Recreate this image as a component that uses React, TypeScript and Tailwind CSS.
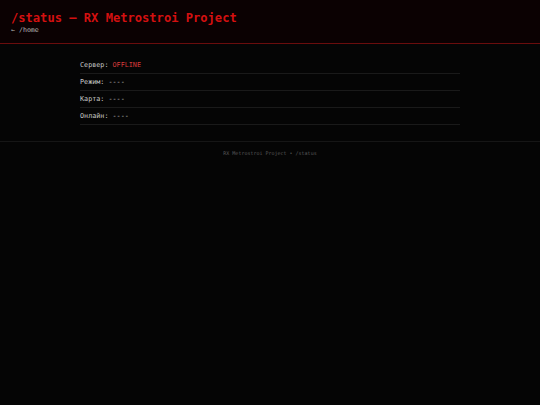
export default function App() {
  const rows: { label: string; value: string; offline?: boolean }[] = [
    { label: "Сервер:", value: "OFFLINE", offline: true },
    { label: "Режим:", value: "----" },
    { label: "Карта:", value: "----" },
    { label: "Онлайн:", value: "----" },
  ];

  return (
    <div
      className="min-h-[405px] bg-[#050505] text-[#c8c8c8] antialiased"
      style={{ fontFamily: '"DejaVu Sans Mono", "Liberation Mono", monospace' }}
    >
      <header className="h-[44px] bg-[#0b0102] border-b border-[#6a0d0d] px-[11px] pt-[10px]">
        <h1 className="text-[12.1px] leading-[16px] font-bold text-[#d41010]">
          /status — RX Metrostroi Project
        </h1>
        <a className="block text-[6.6px] leading-[8px] text-[#b8b8b8]">← /home</a>
      </header>

      <main className="border-b border-[#161616] pt-[13px] pb-[16px]">
        <div className="w-[380px] mx-auto">
          {rows.map((r) => (
            <div
              key={r.label}
              className="h-[17px] flex items-center border-b border-[#1a1a1a] text-[6.75px]"
            >
              <span>{r.label}&nbsp;</span>
              <span className={r.offline ? "text-[#d63a3a]" : "text-[#c8c8c8]"}>
                {r.value}
              </span>
            </div>
          ))}
        </div>
      </main>

      <footer className="pt-[8px] text-center text-[5px] text-[#5a5a5a]">
        RX Metrostroi Project • /status
      </footer>
    </div>
  );
}
